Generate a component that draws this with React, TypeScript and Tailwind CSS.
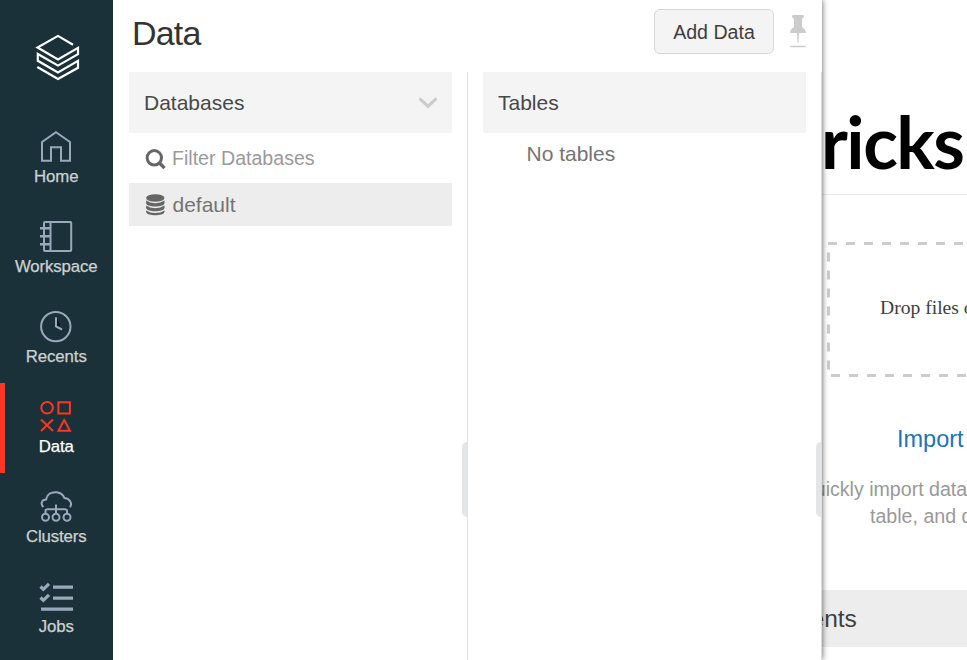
import type { ReactNode } from 'react';

function NavItem({ label, active = false, children }: { label: string; active?: boolean; children: ReactNode }) {
  return (
    <a
      className={`flex h-[90px] flex-col items-center border-l-[5px] pr-[5.5px] pt-[15px] ${
        active ? 'border-[#ff3621] text-white' : 'border-transparent text-[#cdd2d3]'
      }`}
    >
      <svg
        viewBox="0 0 36 36"
        fill="none"
        strokeWidth="2"
        className={`h-9 w-9 shrink-0 ${active ? 'stroke-[#ff3621]' : 'stroke-[#9aa8bb]'}`}
      >
        {children}
      </svg>
      <span className="mt-[3px] whitespace-nowrap text-[16.8px] leading-5 tracking-[-0.1px] [-webkit-text-stroke:0.25px_currentColor]">
        {label}
      </span>
    </a>
  );
}

function Sidebar() {
  return (
    <nav className="flex w-[113px] shrink-0 flex-col bg-[#1b3139]">
      <div className="flex h-[113px] shrink-0 pl-[35px] pt-[33px]">
        <svg width="46" height="50" viewBox="0 0 46 50" fill="none" stroke="white" strokeWidth="2.2">
          <path d="M38 11.7 23 2.9 2.5 14.5 23 26.5 43 14.8V21.2L23 32.6 2.8 21V27.8L23 39.4 43 27.8V34.8L23 46 2.3 34" />
        </svg>
      </div>
      <NavItem label="Home">
        <path d="M18 4.3 32 14V32.7H23V19.3H13V32.7H4V14Z" />
      </NavItem>
      <NavItem label="Workspace">
        <rect x="6" y="3.9" width="27.2" height="29.2" rx="1" />
        <path d="M12.5 4V33" />
        <path d="M2 10.2H12.5M2 18.2H12.5M2 26.2H12.5" strokeWidth="2.6" />
      </NavItem>
      <NavItem label="Recents">
        <circle cx="17.8" cy="18.6" r="14.7" />
        <path d="M19 10.5 22.5 18.5 19 17.5Z" fill="#071014" stroke="none" />
        <path d="M18 9.3V18.5L24 21.5" />
      </NavItem>
      <NavItem label="Data" active>
        <circle cx="9.1" cy="9.8" r="5.8" />
        <rect x="20.4" y="4.3" width="11.5" height="11.2" />
        <path d="M3 21.5 15 33M15 21.5 3 33M26.2 22 32 32.7H20.4Z" />
      </NavItem>
      <NavItem label="Clusters">
        <path d="M5.4 19C2.2 16 3.6 11.4 8.1 11.4 9 6 13.5 3.9 18.2 4.2 22.4 4.4 25.2 6.7 26.4 10 31.5 10.4 34.8 15 32 19.2M18 16.5V25.5M7.5 25.5V23Q7.5 21.3 9.5 21.3H27Q29 21.3 29 23V25.5" />
        <circle cx="7.5" cy="29.2" r="3.5" />
        <circle cx="18" cy="29.2" r="3.5" />
        <circle cx="29" cy="29.2" r="3.5" />
      </NavItem>
      <NavItem label="Jobs">
        <path d="M15 9.2H35M15 20.2H35M3 31.2H35M2.5 8.5 5.3 11.3 11 5.8M2.5 19.5 5.3 22.3 11 16.8" strokeWidth="3.2" />
      </NavItem>
    </nav>
  );
}

function DatabasesColumn() {
  return (
    <section className="flex w-[355px] shrink-0 justify-between border-r border-[#e2e2e2] pl-4">
      <div className="w-[323px]">
        <div className="flex h-[61px] items-center justify-between bg-[#f4f4f4] pl-[15px] pr-[14px] text-[21px] text-[#484848]">
          Databases
          <svg width="20" height="14" viewBox="0 0 20 14" fill="none" stroke="#cccccc" strokeWidth="3.2" strokeLinecap="round">
            <path d="M2.5 3.3 10 10.3 17.5 3.3" />
          </svg>
        </div>
        <div className="flex h-[50px] items-center pl-4 text-[#9a9a9a]">
          <svg width="22" height="22" viewBox="0 0 22 22" fill="none" stroke="#666666" className="mt-[3px]">
            <circle cx="9.3" cy="8.8" r="7.2" strokeWidth="3" />
            <path d="m14.3 13.8 5.2 5.3" strokeWidth="3.4" />
          </svg>
          <span className="ml-[5px] mt-[2px] text-[19.6px]">Filter Databases</span>
        </div>
        <div className="flex h-[43px] items-center bg-[#ededed] pl-[17px] text-[21px] text-[#747474]">
          <svg width="19" height="22" viewBox="0 0 19 22" fill="#666666">
            <ellipse cx="9.3" cy="4" rx="9.2" ry="3.8" />
            <path d="M.1 6.6Q4 9.2 9.3 9.2T18.5 6.6V9.2C17.8 13.5.8 13.5.1 9.2ZM.1 11.6Q4 14.2 9.3 14.2T18.5 11.6V14C17.8 18.3.8 18.3.1 14ZM.1 16.4Q4 19 9.3 19T18.5 16.4V18C17.8 22.3.8 22.3.1 18Z" />
          </svg>
          <span className="ml-[7.5px]">default</span>
        </div>
      </div>
      <div className="mt-[370px] h-[75px] w-[5px] rounded-l-[5px] bg-[#e3e5e7]" />
    </section>
  );
}

function TablesColumn() {
  return (
    <section className="flex flex-1 justify-between border-r border-[#dddddd] pl-[15px]">
      <div className="w-[323px]">
        <div className="flex h-[61px] items-center bg-[#f4f4f4] pl-[15px] text-[21px] text-[#484848]">Tables</div>
        <div className="flex h-[42px] items-center pl-[43.5px] text-[21px] text-[#747474]">No tables</div>
      </div>
      <div className="mt-[370px] h-[75px] w-[5px] rounded-l-[5px] bg-[#e3e5e7]" />
    </section>
  );
}

function DataPanel() {
  return (
    <div className="z-10 flex w-[709px] shrink-0 flex-col bg-white shadow-[0_0_6px_rgba(0,0,0,0.65)] [clip-path:inset(0_-12px_0_0)]">
      <header className="flex h-[72px] shrink-0 items-start pl-[19px] pr-[15px]">
        <h1 className="mt-[13px] text-[34px] leading-[40px] tracking-[-0.8px] text-[#333333]">Data</h1>
        <button className="ml-auto mt-[9px] h-[45px] w-[120px] rounded-[6px] border border-[#d8d8d8] bg-[#f4f4f4] pt-[2px] text-[19.6px] text-[#3e3e3e]">
          Add Data
        </button>
        <svg width="18" height="34" viewBox="0 0 18 34" fill="#cccccc" className="ml-[15px] mt-[15px]">
          <path d="M4 0H14Q15 0 15 1.5T13.5 3L13 4V12Q16.7 14 17 18H10L9.4 28H8.6L8 18H1Q1.3 14 5 12V4L4.5 3Q3 3 3 1.5T4 0ZM1.3 30.8H16.7V32.2H1.3Z" />
        </svg>
      </header>
      <div className="flex flex-1">
        <DatabasesColumn />
        <TablesColumn />
      </div>
    </div>
  );
}

function Welcome() {
  return (
    <main className="flex w-[145px] flex-col overflow-hidden whitespace-nowrap bg-white text-[19.6px]">
      <div className="h-[195px] shrink-0 border-b border-[#e8e8e8] pt-[98px]">
        <div className="-ml-px font-[Lato,sans-serif] text-[72px] font-bold leading-[87px] tracking-[-1.5px] text-black">
          ricks
        </div>
      </div>
      <div className="ml-[5px] mt-[47px] grid h-[135px] shrink-0 *:col-start-1 *:row-start-1">
        <svg width="140" height="135" fill="none" stroke="#cccccc" strokeWidth="3" strokeDasharray="9 9">
          <path d="M1 1.5H140M4 133.5H140M1.5 10.5V128" />
        </svg>
        <p className="pl-[53px] pt-[54px] font-['Liberation_Serif',serif] leading-6 text-[#3e3e3e]">Drop files or</p>
      </div>
      <h2 className="ml-[75px] mt-[48px] text-[23.5px] leading-7 text-[#2272b9]">Import</h2>
      <div className="mt-[23px] h-[54px] leading-[27px] text-[#999999]">
        <p className="-ml-[22.5px]">Quickly import data into</p>
        <p className="ml-12">table, and query</p>
      </div>
      <div className="mt-[60px] h-[57px] shrink-0 bg-[#ededed] text-[24.5px] leading-[58px] text-[#3e3e3e]">
        <span className="-ml-[11.5px]">ents</span>
      </div>
    </main>
  );
}

export default function App() {
  return (
    <div className="flex h-[660px] w-[967px] overflow-hidden bg-white font-['Liberation_Sans',Arial,sans-serif]">
      <Sidebar />
      <DataPanel />
      <Welcome />
    </div>
  );
}
